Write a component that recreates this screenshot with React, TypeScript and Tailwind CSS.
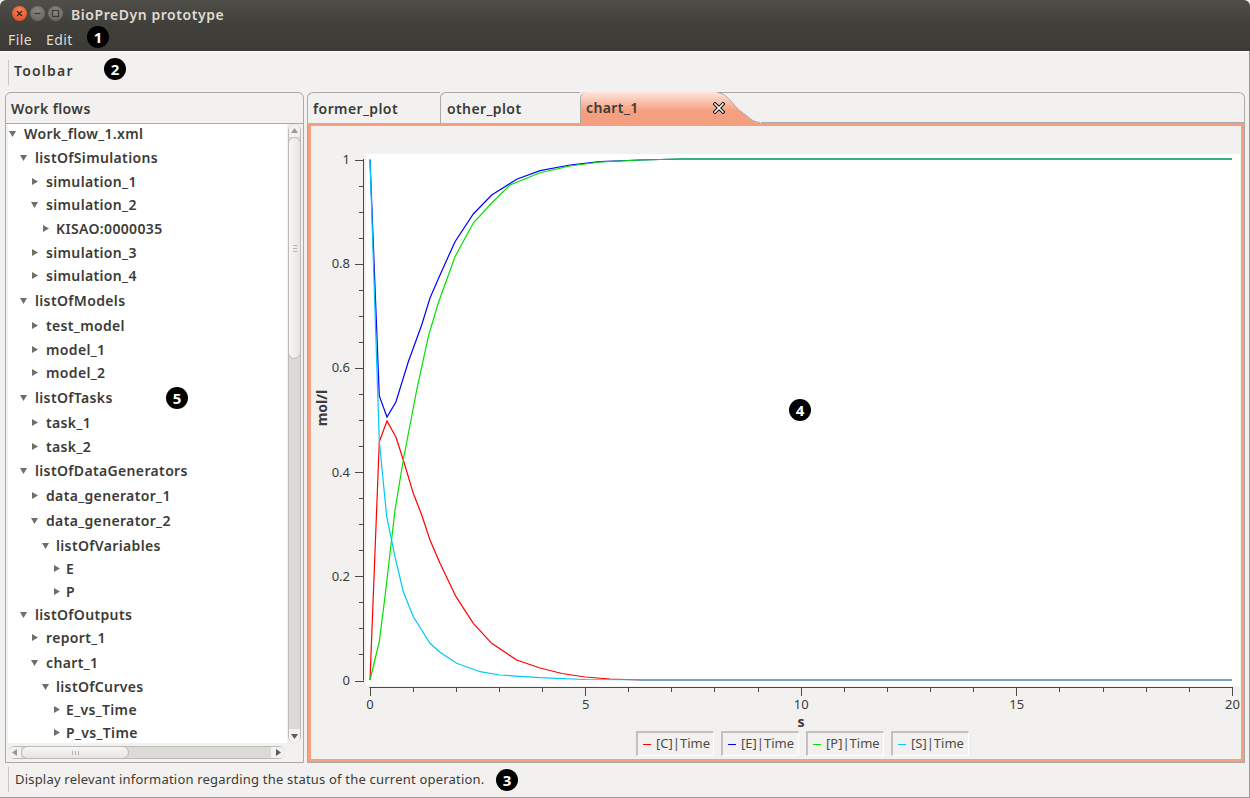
import React from "react";

const FONT = "font-['Noto_Sans','DejaVu_Sans',sans-serif]";

type Row = { label: string; depth: string; text: string; open?: boolean; h: string };

// row heights are uneven in the picture, so each row keeps its own
const rows: Row[] = [
  { label: "Work_flow_1.xml", depth: "pl-0", text: "ml-[7px]", open: true, h: "h-[25px]" },
  { label: "listOfSimulations", depth: "pl-[11px]", text: "ml-[7px]", open: true, h: "h-[23px]" },
  { label: "simulation_1", depth: "pl-[22px]", text: "ml-[7px]", h: "h-[24px]" },
  { label: "simulation_2", depth: "pl-[22px]", text: "ml-[7px]", open: true, h: "h-[23px]" },
  { label: "KISAO:0000035", depth: "pl-[33px]", text: "ml-[6px]", h: "h-[24px]" },
  { label: "simulation_3", depth: "pl-[22px]", text: "ml-[7px]", h: "h-[24px]" },
  { label: "simulation_4", depth: "pl-[22px]", text: "ml-[7px]", h: "h-[23px]" },
  { label: "listOfModels", depth: "pl-[11px]", text: "ml-[7px]", open: true, h: "h-[26px]" },
  { label: "test_model", depth: "pl-[22px]", text: "ml-[7px]", h: "h-[25px]" },
  { label: "model_1", depth: "pl-[22px]", text: "ml-[7px]", h: "h-[23px]" },
  { label: "model_2", depth: "pl-[22px]", text: "ml-[7px]", h: "h-[23px]" },
  { label: "listOfTasks", depth: "pl-[11px]", text: "ml-[7px]", open: true, h: "h-[26px]" },
  { label: "task_1", depth: "pl-[22px]", text: "ml-[7px]", h: "h-[25px]" },
  { label: "task_2", depth: "pl-[22px]", text: "ml-[7px]", h: "h-[23px]" },
  { label: "listOfDataGenerators", depth: "pl-[11px]", text: "ml-[7px]", open: true, h: "h-[25px]" },
  { label: "data_generator_1", depth: "pl-[22px]", text: "ml-[7px]", h: "h-[25px]" },
  { label: "data_generator_2", depth: "pl-[22px]", text: "ml-[7px]", open: true, h: "h-[25px]" },
  { label: "listOfVariables", depth: "pl-[33px]", text: "ml-[6px]", open: true, h: "h-[24px]" },
  { label: "E", depth: "pl-[44px]", text: "ml-[5px]", h: "h-[23px]" },
  { label: "P", depth: "pl-[44px]", text: "ml-[5px]", h: "h-[23px]" },
  { label: "listOfOutputs", depth: "pl-[11px]", text: "ml-[7px]", open: true, h: "h-[22px]" },
  { label: "report_1", depth: "pl-[22px]", text: "ml-[7px]", h: "h-[25px]" },
  { label: "chart_1", depth: "pl-[22px]", text: "ml-[7px]", open: true, h: "h-[24px]" },
  { label: "listOfCurves", depth: "pl-[33px]", text: "ml-[6px]", open: true, h: "h-[24px]" },
  { label: "E_vs_Time", depth: "pl-[44px]", text: "ml-[5px]", h: "h-[23px]" },
  { label: "P_vs_Time", depth: "pl-[44px]", text: "ml-[5px]", h: "h-[22px]" },
];

const curves = [
  {
    color: "#ff0000",
    points:
      "370,680 379.3,441.7 387,421 396,437.3 403.3,460 413.3,493.3 421.7,515 430,540 440,563.3 456,596.7 473.3,623.3 491.7,643.3 516.7,660 540,668 562,673.5 585,677 610,679 640,680 680,680",
  },
  {
    color: "#0000ff",
    points:
      "370,159.5 379.3,396 387,417 396,401.7 408.3,361.7 421.7,325 430,298 440,275 455,241.7 473.3,214 491.7,195 516.7,179.3 540,170.7 570,165 600,161.7 640,160 680,159",
  },
  {
    color: "#00e000",
    points:
      "370,680 379.3,641.7 385,596.7 395,510 403.3,460 416.7,390 428.3,336.7 438.3,303 455,256.7 473.3,223 491.7,203 510,185 540,172.7 570,166 600,162 640,160 680,159",
  },
  {
    color: "#00c8f5",
    points:
      "370,159.5 379.3,441 386.7,516.7 395,556.7 403.3,591.7 413.3,616.7 430,643.3 440,652.3 456.7,663.3 480,671.7 500,675 540,677.7 585,679.5 680,680",
  },
];

const yTicks = Array.from({ length: 21 }, (_, i) => i);
const xTicks = Array.from({ length: 21 }, (_, i) => i);

function Arrow({ open }: { open?: boolean }) {
  return (
    <svg width="9" height="9" viewBox="0 0 9 9" className="shrink-0">
      {open ? <path d="M1 2h7L4.5 8z" fill="#6f6e6a" /> : <path d="M2 1v7l6-3.5z" fill="#6f6e6a" />}
    </svg>
  );
}

function Badge({ n, className }: { n: number; className: string }) {
  return (
    <div
      className={`absolute w-[22px] h-[22px] rounded-full bg-black text-white text-[15px] font-bold flex items-center justify-center ${className}`}
    >
      {n}
    </div>
  );
}

function CloseIcon() {
  return (
    <svg width="12" height="12" viewBox="0 0 12 12" className="block">
      <path d="M2 2l8 8M10 2l-8 8" stroke="#000" strokeWidth="3.4" strokeLinecap="square" />
      <path d="M2 2l8 8M10 2l-8 8" stroke="#fff" strokeWidth="1.6" strokeLinecap="square" />
    </svg>
  );
}

function WindowButton({ kind }: { kind: "close" | "min" | "max" }) {
  const bg =
    kind === "close"
      ? "bg-[radial-gradient(circle_at_50%_35%,#f58a5c,#d9431a)]"
      : "bg-[radial-gradient(circle_at_50%_35%,#8a8880,#5e5c56)]";
  return (
    <div className={`w-[15px] h-[15px] rounded-full flex items-center justify-center ${bg}`}>
      <svg width="9" height="9" viewBox="0 0 9 9">
        {kind === "close" && <path d="M2 2l5 5M7 2l-5 5" stroke="#4a1a0a" strokeWidth="1.3" />}
        {kind === "min" && <path d="M1.5 4.5h6" stroke="#3c3b37" strokeWidth="1.5" />}
        {kind === "max" && <rect x="1.5" y="1.5" width="6" height="6" fill="none" stroke="#3c3b37" strokeWidth="1.2" />}
      </svg>
    </div>
  );
}

function Chart() {
  return (
    <svg width="931" height="605" viewBox="311 126 931 605" className="block shrink-0">
      <rect x="366" y="154" width="874" height="532" fill="#ffffff" />
      {curves.map((c) => (
        <polyline key={c.color} points={c.points} fill="none" stroke={c.color} strokeWidth="1.2" />
      ))}
      <path d="M680 159H1232" stroke="#3cb17f" strokeWidth="2" />
      <path d="M640 680H1232" stroke="#7fa3bf" strokeWidth="2" />

      <g stroke="#4a4a48" strokeWidth="1" fill="none">
        <path d="M363.5 159V680.5" />
        {yTicks.map((i) => {
          const y = Math.round(159.5 + i * 26.05) + 0.5;
          return <path key={i} d={`M${i % 4 === 0 ? 355 : 359} ${y}H364`} />;
        })}
        <path d="M369.5 687.5H1232.5" />
        {xTicks.map((i) => {
          const x = Math.round(369.5 + i * 43.12) + 0.5;
          return <path key={i} d={`M${x} 687V${i % 5 === 0 ? 696 : 692}`} />;
        })}
      </g>

      <g fill="#3c3b37" fontSize="13" textAnchor="end">
        {["1", "0.8", "0.6", "0.4", "0.2", "0"].map((t, i) => (
          <text key={t} x="350" y={164 + i * 104.2}>
            {t}
          </text>
        ))}
      </g>
      <g fill="#3c3b37" fontSize="13" textAnchor="middle">
        {["0", "5", "10", "15", "20"].map((t, i) => (
          <text key={t} x={370 + i * 215.6} y="709">
            {t}
          </text>
        ))}
      </g>
      <text x="801" y="727" fill="#3c3b37" fontSize="14" fontWeight="700" textAnchor="middle">
        s
      </text>
      <text
        x="327"
        y="408"
        fill="#3c3b37"
        fontSize="14"
        fontWeight="700"
        textAnchor="middle"
        transform="rotate(-90 327 408)"
      >
        mol/l
      </text>
    </svg>
  );
}

function LegendItem({ label, swatch }: { label: string; swatch: string }) {
  return (
    <div className="w-[78px] h-[25px] flex items-center pl-[5px] gap-[5px] border-t-2 border-l-2 border-r border-b border-t-[#c2c1bf] border-l-[#c2c1bf] border-r-white border-b-white text-[13px] text-[#4c4c4a] whitespace-nowrap">
      <span className={`w-[8px] h-px shrink-0 ${swatch}`} />
      {label}
    </div>
  );
}

function VScrollbar() {
  return (
    <div className="w-[13px] ml-px flex flex-col bg-[#dcdad6] rounded-full border-x border-[#bdbbb6]">
      <div className="h-[13px] flex items-center justify-center bg-[#f2f1f0] rounded-t-full">
        <svg width="7" height="5" viewBox="0 0 7 5">
          <path d="M3.5 0L7 5H0z" fill="#9b9a96" />
        </svg>
      </div>
      <div className="h-[222px] rounded-full border border-[#bdbbb6] -mx-px bg-gradient-to-r from-[#f7f6f5] to-[#e6e5e3] flex flex-col items-center justify-center gap-[2px]">
        <span className="w-[4px] h-px bg-[#b5b3ae]" />
        <span className="w-[4px] h-px bg-[#b5b3ae]" />
        <span className="w-[4px] h-px bg-[#b5b3ae]" />
      </div>
      <div className="flex-1" />
      <div className="h-[14px] flex items-center justify-center bg-[#f2f1f0] rounded-b-full">
        <svg width="7" height="5" viewBox="0 0 7 5">
          <path d="M0 0h7L3.5 5z" fill="#5c5b57" />
        </svg>
      </div>
    </div>
  );
}

function HScrollbar() {
  return (
    <div className="h-[13px] mt-[3px] ml-[2px] w-[277px] flex bg-[#dcdad6] rounded-full border-y border-[#bdbbb6]">
      <div className="w-[13px] flex items-center justify-center bg-[#f2f1f0] rounded-l-full">
        <svg width="5" height="7" viewBox="0 0 5 7">
          <path d="M5 0v7L0 3.5z" fill="#9b9a96" />
        </svg>
      </div>
      <div className="w-[108px] -my-px rounded-full border border-[#bdbbb6] bg-gradient-to-b from-[#f7f6f5] to-[#e6e5e3] flex items-center justify-center gap-[2px]">
        <span className="w-px h-[4px] bg-[#b5b3ae]" />
        <span className="w-px h-[4px] bg-[#b5b3ae]" />
        <span className="w-px h-[4px] bg-[#b5b3ae]" />
      </div>
      <div className="flex-1" />
      <div className="w-[14px] flex items-center justify-center bg-[#f2f1f0] rounded-r-full">
        <svg width="5" height="7" viewBox="0 0 5 7">
          <path d="M0 0v7l5-3.5z" fill="#5c5b57" />
        </svg>
      </div>
    </div>
  );
}

export default function App() {
  return (
    <div className={`relative w-[1250px] h-[798px] overflow-hidden flex flex-col bg-[#f2f1f0] text-[#3c3b37] ${FONT}`}>
      {/* title bar + menu */}
      <header className="h-[51px] shrink-0 rounded-t-[6px] bg-gradient-to-b from-[#504e49] via-[#403f3a] to-[#3c3b37] flex flex-col">
        <div className="h-[27px] flex items-center pl-[12px]">
          <div className="flex items-center gap-[3px]">
            <WindowButton kind="close" />
            <WindowButton kind="min" />
            <WindowButton kind="max" />
          </div>
          <span className="ml-[8px] mt-px text-[14px] font-semibold tracking-[0.55px] text-[#dfdbd2]">BioPreDyn prototype</span>
        </div>
        <div className="h-[24px] flex items-center pl-[8px] gap-[14px] text-[14px] tracking-[0.4px] text-[#dfdbd2]">
          <span>File</span>
          <span>Edit</span>
        </div>
      </header>

      <div className="flex-1 min-h-0 flex flex-col border-r border-r-[#9a9a98]">
        {/* toolbar */}
        <div className="h-[41px] shrink-0 border-t border-white flex items-center pl-[8px] gap-[5px]">
          <div className="w-px h-[25px] bg-[#c9c7c3]" />
          <span className="mt-[-3px] text-[14px] font-semibold tracking-[1.2px]">Toolbar</span>
        </div>

        {/* main */}
        <main className="flex-1 min-h-0 flex pl-[5px] gap-[3px]">
          <section className="w-[299px] flex flex-col border border-[#aaa9a6] rounded-t-[6px]">
            <div className="h-[31px] shrink-0 flex items-center pl-[5px] text-[14px] font-semibold tracking-[0.4px] border-b border-[#aaa9a6]">
              Work flows
            </div>
            <div className="h-[619px] flex pl-[2px]">
              <div className="w-[279px] bg-white overflow-hidden text-[14px] font-semibold tracking-[0.35px]">
                <div className="-mt-[3px]">
                  {rows.map((r) => (
                    <div key={r.label} className={`flex items-center ${r.h} ${r.depth}`}>
                      <Arrow open={r.open} />
                      <span className={r.text}>{r.label}</span>
                    </div>
                  ))}
                </div>
              </div>
              <VScrollbar />
            </div>
            <HScrollbar />
          </section>

          <section className="w-[938px] flex flex-col">
            <div className="h-[31px] shrink-0 flex text-[14px] font-semibold tracking-[0.4px]">
              <div className="w-[133px] flex items-center pl-[5px] border-l border-t border-[#aaa9a6] rounded-tl-[6px]">
                former_plot
              </div>
              <div className="w-[140px] flex items-center pl-[6px] border-l border-t border-[#aaa9a6] rounded-tl-[6px]">
                other_plot
              </div>
              <div className="w-[138px] flex items-center justify-between pl-[5px] border-l border-[#aaa9a6] rounded-tl-[6px] bg-gradient-to-b from-[#fde6de] to-[#f4a080] to-60%">
                chart_1
                <span className="relative z-10 mr-[-7px]">
                  <CloseIcon />
                </span>
              </div>
              <svg width="44" height="31" viewBox="0 0 44 31" className="shrink-0 -ml-px">
                <defs>
                  <linearGradient id="tabFill" x1="0" y1="0" x2="0" y2="1">
                    <stop offset="0" stopColor="#fde6de" />
                    <stop offset="0.6" stopColor="#f4a080" />
                  </linearGradient>
                </defs>
                <path d="M0 0.5C6 1 9 4 13 8S20 17 26 21S35 30 43 31H0z" fill="url(#tabFill)" />
                <path d="M0 0.5H44" fill="none" stroke="#aaa9a6" />
                <path d="M0 0.5C6 1 9 4 13 8S20 17 26 21S35 30 43 30.5" fill="none" stroke="#aaa9a6" />
              </svg>
              <div className="flex-1 border-t border-r border-b border-[#aaa9a6] rounded-tr-[6px]" />
            </div>
            <div className="h-[640px] flex flex-col border-x border-b border-[#aaa9a6]">
              <div className="flex-1 flex flex-col border-[3px] border-[#f4a080]">
                <Chart />
                <div className="flex pl-[325px] gap-[7px]">
                  <LegendItem label="[C]|Time" swatch="bg-[#ff0000]" />
                  <LegendItem label="[E]|Time" swatch="bg-[#0000ff]" />
                  <LegendItem label="[P]|Time" swatch="bg-[#00e000]" />
                  <LegendItem label="[S]|Time" swatch="bg-[#00c8f5]" />
                </div>
              </div>
            </div>
          </section>
        </main>

        {/* status bar */}
        <footer className="h-[35px] shrink-0 flex items-center pl-[8px] gap-[6px] border-b border-[#9a9a98] text-[13px] tracking-[0.2px]">
          <div className="w-px h-[25px] bg-[#c9c7c3] mt-[-2px]" />
          <span className="mt-[-1px]">Display relevant information regarding the status of the current operation.</span>
        </footer>
      </div>

      <Badge n={1} className="left-[87px] top-[26px]" />
      <Badge n={2} className="left-[104px] top-[58px]" />
      <Badge n={3} className="left-[496px] top-[769px]" />
      <Badge n={4} className="left-[789px] top-[399px]" />
      <Badge n={5} className="left-[166px] top-[387px]" />
    </div>
  );
}
